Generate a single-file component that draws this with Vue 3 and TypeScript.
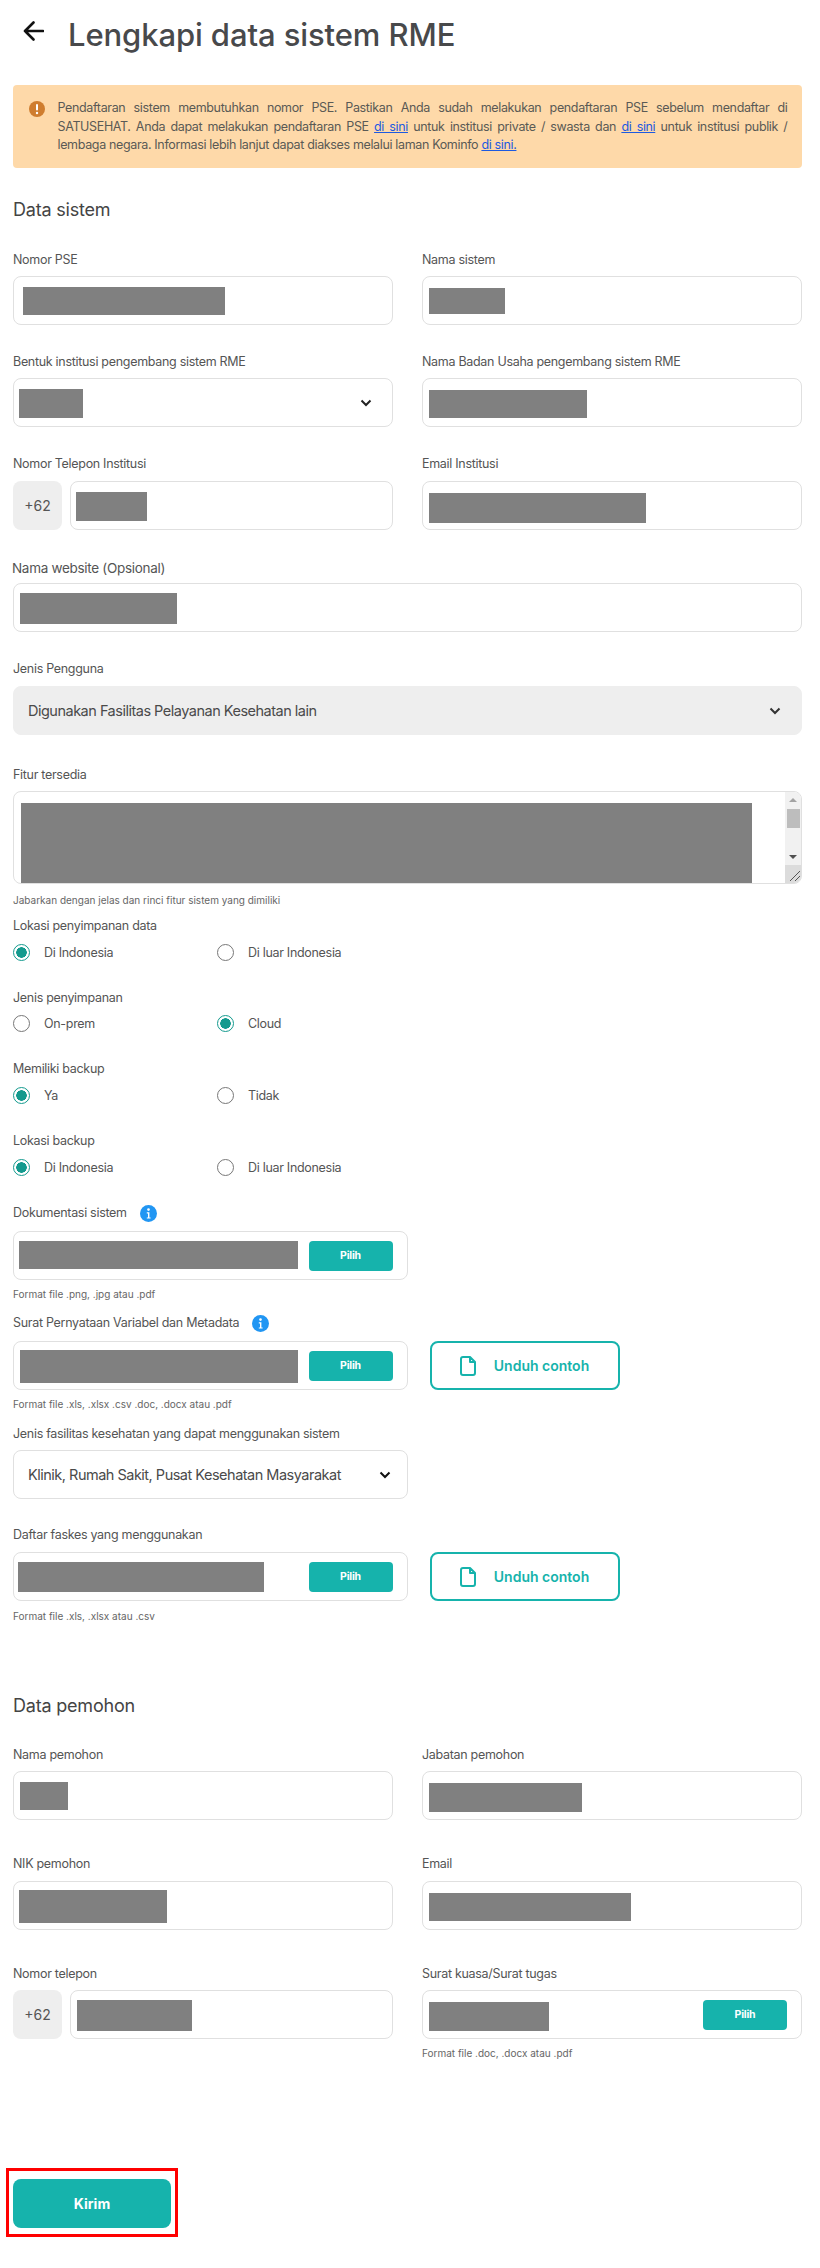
<script setup lang="ts">
interface Mask { x: number; y: number; w: number; h: number }
interface Col {
  label: string
  kind: 'input' | 'select' | 'phone' | 'file'
  mask: Mask
  hint?: string
}
interface Row { cls: string; cols: Col[] }

const sistemRows: Row[] = [
  { cls: 'lab7', cols: [
    { label: 'Nomor PSE', kind: 'input', mask: { x: 9, y: 10, w: 201.5, h: 28 } },
    { label: 'Nama sistem', kind: 'input', mask: { x: 6, y: 11, w: 76, h: 26 } },
  ] },
  { cls: 'mt28 lab7', cols: [
    { label: 'Bentuk institusi pengembang sistem RME', kind: 'select', mask: { x: 5, y: 10, w: 64, h: 29 } },
    { label: 'Nama Badan Usaha pengembang sistem RME', kind: 'input', mask: { x: 6, y: 11, w: 158, h: 28 } },
  ] },
  { cls: 'mt28 lab8', cols: [
    { label: 'Nomor Telepon Institusi', kind: 'phone', mask: { x: 5, y: 10, w: 71, h: 29 } },
    { label: 'Email Institusi', kind: 'input', mask: { x: 6, y: 11, w: 217, h: 30 } },
  ] },
]

const pemohonRows: Row[] = [
  { cls: 'lab7', cols: [
    { label: 'Nama pemohon', kind: 'input', mask: { x: 6, y: 10, w: 48, h: 28 } },
    { label: 'Jabatan pemohon', kind: 'input', mask: { x: 6, y: 11, w: 153, h: 29 } },
  ] },
  { cls: 'mt35 lab8', cols: [
    { label: 'NIK pemohon', kind: 'input', mask: { x: 5, y: 8, w: 148, h: 33 } },
    { label: 'Email', kind: 'input', mask: { x: 6, y: 11, w: 202, h: 28 } },
  ] },
  { cls: 'mt35 lab7', cols: [
    { label: 'Nomor telepon', kind: 'phone', mask: { x: 6, y: 9, w: 115, h: 31 } },
    { label: 'Surat kuasa/Surat tugas', kind: 'file', mask: { x: 6, y: 11, w: 120, h: 29 }, hint: 'Format file .doc, .docx atau .pdf' },
  ] },
]

const radioGroups = [
  { label: 'Lokasi penyimpanan data', name: 'lokasi', options: ['Di Indonesia', 'Di luar Indonesia'], checked: 0 },
  { label: 'Jenis penyimpanan', name: 'jenis', options: ['On-prem', 'Cloud'], checked: 1 },
  { label: 'Memiliki backup', name: 'backup', options: ['Ya', 'Tidak'], checked: 0 },
  { label: 'Lokasi backup', name: 'lokasi-backup', options: ['Di Indonesia', 'Di luar Indonesia'], checked: 0 },
]

const fiturText = Array.from({ length: 12 }, () => 'Fitur sistem').join('\n')

function maskStyle(m: Mask) {
  return { left: `${m.x}px`, top: `${m.y}px`, width: `${m.w}px`, height: `${m.h}px` }
}
</script>

<template>
  <main class="page">
    <header class="head">
      <svg class="back" viewBox="0 0 21 20" width="21" height="20" aria-hidden="true">
        <path d="M20 10H2M10.5 1.5 2 10l8.5 8.5" fill="none" stroke="#111" stroke-width="2.6" stroke-linecap="round" stroke-linejoin="round" />
      </svg>
      <h1 class="title">Lengkapi data sistem RME</h1>
    </header>

    <section class="notice">
      <svg class="notice-icon" viewBox="0 0 16 16" width="16" height="16" aria-hidden="true">
        <circle cx="8" cy="8" r="8" fill="#cf7d2f" />
        <rect x="7" y="3" width="2" height="6.5" rx="1" fill="#fff" />
        <circle cx="8" cy="12" r="1.2" fill="#fff" />
      </svg>
      <p class="notice-text">Pendaftaran sistem membutuhkan nomor PSE. Pastikan Anda sudah melakukan pendaftaran PSE sebelum mendaftar di SATUSEHAT. Anda dapat melakukan pendaftaran PSE <a>di sini</a> untuk institusi private / swasta dan <a>di sini</a> untuk institusi publik / lembaga negara. Informasi lebih lanjut dapat diakses melalui laman Kominfo <a>di sini.</a></p>
    </section>

    <h2 class="section first">Data sistem</h2>

    <div v-for="row in sistemRows" :key="row.cols[0].label" class="grid" :class="row.cls">
      <div v-for="col in row.cols" :key="col.label">
        <div class="label">{{ col.label }}</div>
        <div v-if="col.kind === 'phone'" class="phone">
          <span class="prefix">+62</span>
          <div class="control grow"><input class="native" readonly /><i class="mask" :style="maskStyle(col.mask)"></i></div>
        </div>
        <div v-else class="control" :class="{ selectish: col.kind === 'select' }">
          <input v-if="col.kind === 'input'" class="native" readonly />
          <i class="mask" :style="maskStyle(col.mask)"></i>
          <svg v-if="col.kind === 'select'" class="chev" viewBox="0 0 12 8" width="12" height="8" aria-hidden="true"><path d="M1.5 1.5 6 6l4.5-4.5" fill="none" stroke="#222" stroke-width="2" /></svg>
        </div>
      </div>
    </div>

    <div class="website">
      <div class="label big">Nama website (Opsional)</div>
      <div class="control"><input class="native" readonly /><i class="mask" :style="maskStyle({ x: 6, y: 9, w: 157, h: 31 })"></i></div>
    </div>

    <div class="pengguna">
      <div class="label">Jenis Pengguna</div>
      <div class="control filled">
        <span class="select-text">Digunakan Fasilitas Pelayanan Kesehatan lain</span>
        <svg class="chev" viewBox="0 0 12 8" width="12" height="8" aria-hidden="true"><path d="M1.5 1.5 6 6l4.5-4.5" fill="none" stroke="#333" stroke-width="2" /></svg>
      </div>
    </div>

    <div class="fitur">
      <div class="label">Fitur tersedia</div>
      <div class="area-wrap">
        <textarea class="area" readonly :value="fiturText"></textarea>
        <i class="mask area-mask"></i>
        <div class="scroll" aria-hidden="true">
          <span class="arrow up"></span>
          <span class="thumb"></span>
          <span class="arrow down"></span>
          <span class="corner">
            <svg viewBox="0 0 18 18" width="18" height="18"><path d="M5 16 15 6M10 16l5-5" fill="none" stroke="#555" stroke-width="1" /></svg>
          </span>
        </div>
      </div>
      <div class="hint h7">Jabarkan dengan jelas dan rinci fitur sistem yang dimiliki</div>
    </div>

    <div v-for="(g, i) in radioGroups" :key="g.name" class="radio-group" :class="{ firstgroup: i === 0 }">
      <div class="label">{{ g.label }}</div>
      <div class="radios">
        <label v-for="(o, j) in g.options" :key="o" class="radio">
          <input type="radio" :name="g.name" :checked="j === g.checked" />
          <span>{{ o }}</span>
        </label>
      </div>
    </div>

    <div class="label with-info doc">
      Dokumentasi sistem
      <svg class="info wide" viewBox="0 0 17 17" width="17" height="17" aria-hidden="true"><circle cx="8.5" cy="8.5" r="8.5" fill="#2196f3" /><circle cx="8.5" cy="4.6" r="1.3" fill="#fff" /><path d="M6.8 7.2h2.6v5.2h1.2v1.2H6.8v-1.2H8V8.4H6.8z" fill="#fff" /></svg>
    </div>
    <div class="file-row">
      <div class="control file-box"><i class="mask" :style="maskStyle({ x: 5, y: 9, w: 279, h: 28 })"></i><button class="pilih">Pilih</button></div>
    </div>
    <div class="hint h5">Format file .png, .jpg atau .pdf</div>

    <div class="label with-info surat">
      Surat Pernyataan Variabel dan Metadata
      <svg class="info" viewBox="0 0 17 17" width="17" height="17" aria-hidden="true"><circle cx="8.5" cy="8.5" r="8.5" fill="#2196f3" /><circle cx="8.5" cy="4.6" r="1.3" fill="#fff" /><path d="M6.8 7.2h2.6v5.2h1.2v1.2H6.8v-1.2H8V8.4H6.8z" fill="#fff" /></svg>
    </div>
    <div class="file-row">
      <div class="control file-box"><i class="mask" :style="maskStyle({ x: 6, y: 8, w: 278, h: 33 })"></i><button class="pilih">Pilih</button></div>
      <button class="unduh">
        <svg viewBox="0 0 16 20" width="16" height="20" aria-hidden="true"><path d="M3 1h7l5 5v11a2 2 0 0 1-2 2H3a2 2 0 0 1-2-2V3a2 2 0 0 1 2-2zM10 1v5h5" fill="none" stroke="#16b3ac" stroke-width="2" stroke-linejoin="round" /></svg>
        Unduh contoh
      </button>
    </div>
    <div class="hint h5">Format file .xls, .xlsx .csv .doc, .docx atau .pdf</div>

    <div class="label fasilitas">Jenis fasilitas kesehatan yang dapat menggunakan sistem</div>
    <div class="control file-box select-box">
      <span class="select-text">Klinik, Rumah Sakit, Pusat Kesehatan Masyarakat</span>
      <svg class="chev" viewBox="0 0 12 8" width="12" height="8" aria-hidden="true"><path d="M1.5 1.5 6 6l4.5-4.5" fill="none" stroke="#111" stroke-width="2" /></svg>
    </div>

    <div class="label daftar">Daftar faskes yang menggunakan</div>
    <div class="file-row">
      <div class="control file-box"><i class="mask" :style="maskStyle({ x: 4, y: 9, w: 246, h: 30 })"></i><button class="pilih">Pilih</button></div>
      <button class="unduh">
        <svg viewBox="0 0 16 20" width="16" height="20" aria-hidden="true"><path d="M3 1h7l5 5v11a2 2 0 0 1-2 2H3a2 2 0 0 1-2-2V3a2 2 0 0 1 2-2zM10 1v5h5" fill="none" stroke="#16b3ac" stroke-width="2" stroke-linejoin="round" /></svg>
        Unduh contoh
      </button>
    </div>
    <div class="hint h6">Format file .xls, .xlsx atau .csv</div>

    <h2 class="section second">Data pemohon</h2>

    <div v-for="row in pemohonRows" :key="row.cols[0].label" class="grid" :class="row.cls">
      <div v-for="col in row.cols" :key="col.label">
        <div class="label">{{ col.label }}</div>
        <div v-if="col.kind === 'phone'" class="phone">
          <span class="prefix">+62</span>
          <div class="control grow"><input class="native" readonly /><i class="mask" :style="maskStyle(col.mask)"></i></div>
        </div>
        <div v-else-if="col.kind === 'file'" class="control file-end">
          <i class="mask" :style="maskStyle(col.mask)"></i><button class="pilih">Pilih</button>
        </div>
        <div v-else class="control">
          <input class="native" readonly />
          <i class="mask" :style="maskStyle(col.mask)"></i>
        </div>
        <div v-if="col.hint" class="hint h5">{{ col.hint }}</div>
      </div>
    </div>

    <div class="submit-frame"><button class="kirim">Kirim</button></div>
  </main>
</template>

<style>
body { background: #fff; }
</style>

<style scoped>
.page {
  box-sizing: border-box;
  width: 820px;
  height: 2268px;
  padding: 0 18px 0 13px;
  font-family: Inter, "Noto Sans", sans-serif;
  color: #4a4a4a;
  overflow: hidden;
}
.head { display: flex; gap: 24px; margin-left: 10px; height: 85px; padding-top: 14px; box-sizing: border-box; }
.back { margin-top: 7px; flex: none; }
.title { margin: 0; font-size: 31px; line-height: 42px; font-weight: 500; color: #48494b; letter-spacing: -0.1px; }

.notice {
  display: flex;
  height: 83px;
  box-sizing: border-box;
  padding: 14px 14.5px 0 16px;
  gap: 12.5px;
  background: #fed9a9;
  border-radius: 4px;
}
.notice-icon { flex: none; margin-top: 2px; }
.notice-text { margin: 0; font-size: 12.5px; line-height: 18.5px; text-align: justify; color: #5a5a55; letter-spacing: -0.35px; }
.notice-text a { color: #1d5ae0; text-decoration: underline; }

.section { margin: 0; font-size: 18px; line-height: 24px; font-weight: 400; color: #444; letter-spacing: -0.2px; }
.section.first { margin: 30px 0 29px; }
.section.second { margin: 69px 0 28px; }

.grid { display: grid; grid-template-columns: 380px 380px; column-gap: 29px; }
.mt28 { margin-top: 28px; }
.mt35 { margin-top: 35px; }

.label { height: 18px; line-height: 18px; font-size: 12.5px; color: #555; letter-spacing: -0.3px; white-space: nowrap; }
.lab7 .label { margin-bottom: 7px; }
.lab8 .label { margin-bottom: 8px; }
.label.big { font-size: 13.5px; letter-spacing: -0.3px; margin-bottom: 6px; margin-left: -1px; }

.control {
  position: relative;
  box-sizing: border-box;
  height: 49px;
  border: 1px solid #e0e0e0;
  border-radius: 8px;
  background: #fff;
}
.selectish .chev { position: absolute; right: 20px; top: 20px; }
.native { display: block; width: 100%; height: 100%; border: 0; padding: 0; background: transparent; outline: none; }
.mask { position: absolute; display: block; background: #808080; }
.phone { display: flex; gap: 7.5px; }
.prefix {
  flex: none;
  width: 49px;
  height: 49px;
  line-height: 49px;
  text-align: center;
  font-size: 14px;
  background: #eee;
  border-radius: 8px;
  color: #555;
}
.grow { flex: 1; }

.website { margin-top: 29px; }
.pengguna { margin-top: 28px; }
.pengguna .label { margin-bottom: 8px; }
.filled { display: flex; align-items: center; justify-content: space-between; background: #eee; border-color: #eee; padding: 0 20px 0 14px; }
.select-text { font-size: 14.5px; color: #4a4a4a; letter-spacing: -0.5px; }
.fitur { margin-top: 31px; }
.fitur .label { margin-bottom: 7px; }

.area-wrap { position: relative; height: 93px; }
.area {
  display: block;
  box-sizing: border-box;
  width: 100%;
  height: 93px;
  border: 1px solid #e0e0e0;
  border-radius: 8px;
  padding: 8px 12px;
  font: 13px/18px Inter, sans-serif;
  color: #fff;
  outline: none;
  overflow: hidden;
  resize: none;
}
.area-mask { left: 8px; top: 12px; width: 731px; height: 80px; }
.scroll {
  position: absolute;
  top: 1px;
  right: 1px;
  bottom: 1px;
  width: 16px;
  background: #f1f1f1;
  border-top-right-radius: 7px;
  border-bottom-right-radius: 7px;
  overflow: hidden;
}
.arrow {
  position: absolute;
  left: 4px;
  width: 0;
  height: 0;
  border-left: 4px solid transparent;
  border-right: 4px solid transparent;
}
.arrow.up { top: 6px; border-bottom: 4px solid #a3a3a3; }
.arrow.down { top: 63px; border-top: 4px solid #505050; }
.thumb { position: absolute; left: 1.5px; top: 17px; width: 13px; height: 19px; background: #bdbdbd; }
.corner { position: absolute; left: 0; bottom: 0; width: 16px; height: 18px; background: #dcdcdc; }
.corner svg { display: block; }

.hint { height: 18px; line-height: 18px; font-size: 10px; color: #666; white-space: nowrap; }
.h5 { margin-top: 5px; }
.h6 { margin-top: 6px; }
.h7 { margin-top: 7px; }

.radio-group { margin-top: 27.7px; }
.radio-group.firstgroup { margin-top: 8px; }
.radios { display: grid; grid-template-columns: 204px 204px; margin-top: 8px; }
.radio { display: flex; align-items: center; height: 18px; gap: 14px; font-size: 12.5px; color: #555; letter-spacing: -0.3px; }
.radio input {
  appearance: none;
  box-sizing: border-box;
  width: 17px;
  height: 17px;
  margin: 0;
  border: 1px solid #777;
  border-radius: 50%;
  background: #fff;
}
.radio input:checked { border-color: #149a8e; background: radial-gradient(circle, #149a8e 0 5px, #fff 5.5px); }

.with-info { display: flex; align-items: center; margin-bottom: 9px; }
.doc { margin-top: 28px; }
.surat { margin-top: 11px; }
.info { margin-left: 13px; flex: none; }
.info.wide { margin-left: 13px; }

.file-row { display: flex; gap: 22px; }
.file-box { display: flex; align-items: center; justify-content: flex-end; width: 394.5px; padding-right: 14px; }
.file-end { display: flex; align-items: center; justify-content: flex-end; padding-right: 14px; }
.pilih {
  width: 84px;
  height: 30px;
  border: 0;
  border-radius: 4px;
  background: #16b3ac;
  color: #fff;
  font: 700 10.5px Inter, sans-serif;
  letter-spacing: -0.2px;
}
.unduh {
  display: flex;
  align-items: center;
  justify-content: center;
  gap: 18px;
  box-sizing: border-box;
  width: 190px;
  height: 49px;
  border: 2px solid #16b3ac;
  border-radius: 8px;
  background: #fff;
  color: #16b3ac;
  font: 600 14px Inter, sans-serif;
}
.fasilitas { margin-top: 12px; margin-bottom: 7px; }
.select-box { justify-content: space-between; padding: 0 16px 0 14px; }
.daftar { margin-top: 27px; margin-bottom: 8px; }

.submit-frame {
  box-sizing: border-box;
  width: 172px;
  height: 69px;
  margin: 106px 0 0 -7px;
  padding: 8px 4px;
  border: 3px solid #f00;
}
.kirim {
  display: block;
  width: 158px;
  height: 49px;
  margin: 0;
  border: 0;
  border-radius: 8px;
  background: #16b3ac;
  color: #fff;
  font: 700 14px Inter, sans-serif;
}
</style>
